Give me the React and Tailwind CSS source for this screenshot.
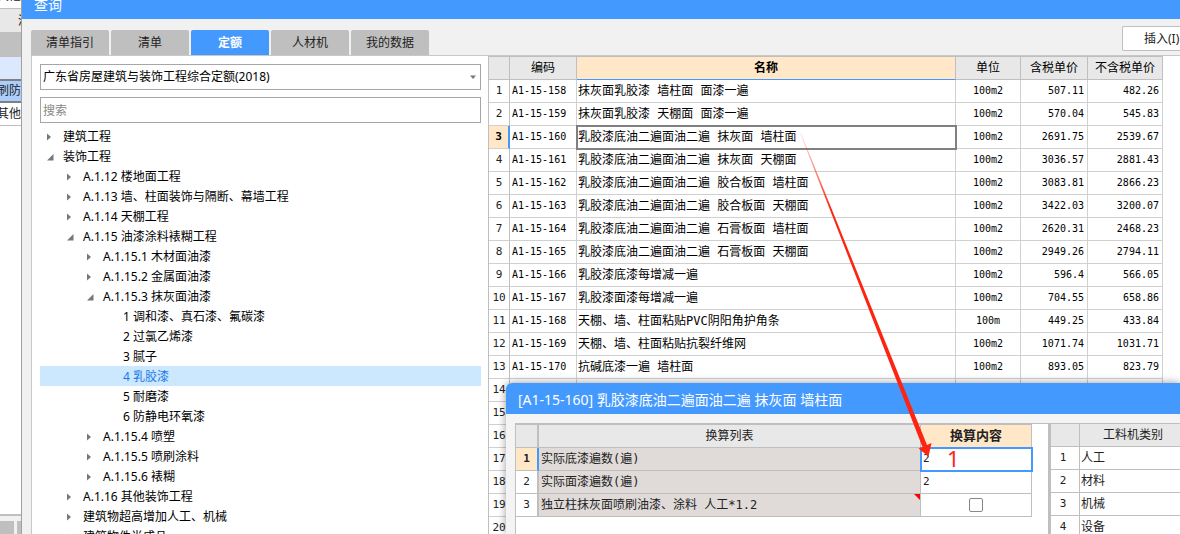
import React from 'react'

const TABS = ['清单指引', '清单', '定额', '人材机', '我的数据']

const TREE = [
  { level: 0, label: '建筑工程', state: 'closed' },
  { level: 0, label: '装饰工程', state: 'open' },
  { level: 1, label: 'A.1.12 楼地面工程', state: 'closed' },
  { level: 1, label: 'A.1.13 墙、柱面装饰与隔断、幕墙工程', state: 'closed' },
  { level: 1, label: 'A.1.14 天棚工程', state: 'closed' },
  { level: 1, label: 'A.1.15 油漆涂料裱糊工程', state: 'open' },
  { level: 2, label: 'A.1.15.1 木材面油漆', state: 'closed' },
  { level: 2, label: 'A.1.15.2 金属面油漆', state: 'closed' },
  { level: 2, label: 'A.1.15.3 抹灰面油漆', state: 'open' },
  { level: 3, label: '1 调和漆、真石漆、氟碳漆' },
  { level: 3, label: '2 过氯乙烯漆' },
  { level: 3, label: '3 腻子' },
  { level: 3, label: '4 乳胶漆', selected: true },
  { level: 3, label: '5 耐磨漆' },
  { level: 3, label: '6 防静电环氧漆' },
  { level: 2, label: 'A.1.15.4 喷塑', state: 'closed' },
  { level: 2, label: 'A.1.15.5 喷刷涂料', state: 'closed' },
  { level: 2, label: 'A.1.15.6 裱糊', state: 'closed' },
  { level: 1, label: 'A.1.16 其他装饰工程', state: 'closed' },
  { level: 1, label: '建筑物超高增加人工、机械', state: 'closed' },
  { level: 1, label: '建筑物件半成品', state: 'closed' },
]

const INDENT = ['pl-[7px]', 'pl-[27px]', 'pl-[47px]', 'pl-[67px]']

const QUOTAS = [
  ['A1-15-158', '抹灰面乳胶漆 墙柱面 面漆一遍', '100m2', '507.11', '482.26'],
  ['A1-15-159', '抹灰面乳胶漆 天棚面 面漆一遍', '100m2', '570.04', '545.83'],
  ['A1-15-160', '乳胶漆底油二遍面油二遍 抹灰面 墙柱面', '100m2', '2691.75', '2539.67'],
  ['A1-15-161', '乳胶漆底油二遍面油二遍 抹灰面 天棚面', '100m2', '3036.57', '2881.43'],
  ['A1-15-162', '乳胶漆底油二遍面油二遍 胶合板面 墙柱面', '100m2', '3083.81', '2866.23'],
  ['A1-15-163', '乳胶漆底油二遍面油二遍 胶合板面 天棚面', '100m2', '3422.03', '3200.07'],
  ['A1-15-164', '乳胶漆底油二遍面油二遍 石膏板面 墙柱面', '100m2', '2620.31', '2468.23'],
  ['A1-15-165', '乳胶漆底油二遍面油二遍 石膏板面 天棚面', '100m2', '2949.26', '2794.11'],
  ['A1-15-166', '乳胶漆底漆每增减一遍', '100m2', '596.4', '566.05'],
  ['A1-15-167', '乳胶漆面漆每增减一遍', '100m2', '704.55', '658.86'],
  ['A1-15-168', '天棚、墙、柱面粘贴PVC阴阳角护角条', '100m', '449.25', '433.84'],
  ['A1-15-169', '天棚、墙、柱面粘贴抗裂纤维网', '100m2', '1071.74', '1031.71'],
  ['A1-15-170', '抗碱底漆一遍 墙柱面', '100m2', '893.05', '823.79'],
  ['', '', '', '', ''],
  ['', '', '', '', ''],
  ['', '', '', '', ''],
  ['', '', '', '', ''],
  ['', '', '', '', ''],
  ['', '', '', '', ''],
  ['', '', '', '', ''],
]

const CATEGORIES = ['人工', '材料', '机械', '设备']

const HEAD = 'h-[23px] border-r border-b border-[#bfbfbf] bg-[#e8e8e8] p-0 font-normal text-black'
const CELL = 'h-[23px] border-r border-b border-[#d0d0d0] p-0 whitespace-nowrap'
const SUBHEAD = 'h-[23px] border-r border-b border-[#bfbfbf] bg-[#e8e8e8] p-0 font-normal text-[#222]'
const SUBCELL = 'h-[23px] border-r border-b border-[#bfbfbf] p-0 whitespace-nowrap'
const MONO = "font-['DejaVu_Sans_Mono','Noto_Sans_CJK_SC',monospace]"

function Marker({ state }) {
  return (
    <svg className="h-2 w-4 shrink-0" viewBox="0 0 16 8" fill="#777" aria-hidden="true">
      {state === 'closed' && <path d="M0 0.5v7l4-3.5z" />}
      {state === 'open' && <path d="M6.5 1v6.5H0z" />}
    </svg>
  )
}

// strip of the main window that stays visible behind the dialog
function BackWindow() {
  return (
    <aside className="flex w-[21px] shrink-0 flex-col overflow-hidden bg-white text-xs whitespace-nowrap text-[#222]">
      <div className="flex h-[9px] items-end justify-end overflow-hidden border-b border-[#bfbfbf] pb-1 leading-4">其他</div>
      <div className="flex h-6 items-center overflow-hidden border-b border-[#bfbfbf] bg-[#e8e8e8] pl-[18px]">清单</div>
      <div className="h-6 bg-[#c0c0c0]" />
      <div className="h-[22px] bg-[#dce8fd]" />
      <div className="flex h-6 items-center justify-end border-y-2 border-[#808080] bg-[#abcefd]">刷防</div>
      <div className="flex h-[23px] items-center justify-end border-b border-[#bfbfbf]">其他</div>
      <div className="flex-1" />
      <div className="flex h-5 gap-[3px] border-t-2 border-[#bfbfbf] bg-[#f1f1f1] pt-[5px]">
        <div className="w-[14px] bg-[#bfbfbf]" />
        <div className="flex-1 bg-[#bfbfbf]" />
      </div>
    </aside>
  )
}

function CatalogPanel() {
  return (
    <div className="w-[457px] shrink-0 border-l border-[#c8c8c8] pt-2 pr-[7px] pl-2">
      <div className="grid items-center">
        <select
          aria-label="定额库"
          className="col-start-1 row-start-1 h-[26px] w-full appearance-none border border-[#a6a6a6] bg-white px-[2px] text-black outline-none"
        >
          <option>广东省房屋建筑与装饰工程综合定额(2018)</option>
        </select>
        <svg className="pointer-events-none col-start-1 row-start-1 mr-[5px] h-1 w-[6px] justify-self-end" viewBox="0 0 6 4" fill="#777" aria-hidden="true">
          <path d="M0 0.5h6L3 4z" />
        </svg>
      </div>
      <input
        type="text"
        aria-label="搜索"
        placeholder="搜索"
        className="mt-[7px] block h-[26px] w-full border border-[#a6a6a6] px-[2px] outline-none placeholder:text-[#888]"
      />
      <ul className="mt-[3px]">
        {TREE.map((n) => (
          <li key={n.label}>
            <button
              type="button"
              className={`flex h-5 w-full items-center pt-[2px] whitespace-nowrap ${INDENT[n.level]} ${n.selected ? 'bg-[#cce8ff] text-[#1a7ae8]' : 'text-black'}`}
            >
              <Marker state={n.state} />
              {n.label}
            </button>
          </li>
        ))}
      </ul>
    </div>
  )
}

function QuotaTable() {
  return (
    <div className="min-w-0 flex-1 pr-[17px]">
      <table className={`w-full table-fixed border-separate border-spacing-0 border-t border-l border-[#bfbfbf] text-xs text-black ${MONO}`}>
        <colgroup>
          <col className="w-[21px]" />
          <col className="w-[67px]" />
          <col />
          <col className="w-[65px]" />
          <col className="w-[67px]" />
          <col className="w-[75px]" />
        </colgroup>
        <thead>
          <tr>
            <th className={HEAD} />
            <th className={HEAD}>编码</th>
            <th className="h-[23px] border-r border-b border-r-[#bfbfbf] border-b-[#4499ff] bg-[#ffe7c8] p-0 font-bold">名称</th>
            <th className={HEAD}>单位</th>
            <th className={HEAD}>含税单价</th>
            <th className={HEAD}>不含税单价</th>
          </tr>
        </thead>
        <tbody>
          {QUOTAS.map(([code, name, unit, price, net], i) => {
            const active = i === 2
            return (
              <tr key={i}>
                <td className={`${CELL} text-center text-[11px] ${active ? 'border-r-2 border-r-[#4499ff] bg-[#ffe7c8] font-bold' : 'border-r-[#bfbfbf] text-[#222]'}`}>{i + 1}</td>
                <td className={`${CELL} pl-[2px] text-[10px]`}>{code}</td>
                <td className={`${CELL} pl-px ${active ? 'outline-2 -outline-offset-1 outline-[#808080]' : ''}`}>{name}</td>
                <td className={`${CELL} text-center text-[10px]`}>{unit}</td>
                <td className={`${CELL} pr-[3px] text-right text-[10px]`}>{price}</td>
                <td className={`${CELL} pr-[3px] text-right text-[10px]`}>{net}</td>
              </tr>
            )
          })}
        </tbody>
      </table>
    </div>
  )
}

function ConversionDialog() {
  return (
    <section className="absolute top-[383px] right-0 bottom-0 left-[506px] flex flex-col overflow-hidden rounded-tl-md bg-[#f4f4f4] shadow-[0_0_8px_rgba(0,0,0,0.4)]">
      <h2 className="flex h-[31px] shrink-0 items-center bg-[#4499ff] pt-[2px] pl-3 text-sm text-white">
        [A1-15-160] 乳胶漆底油二遍面油二遍 抹灰面 墙柱面
      </h2>
      <div className={`mt-[9px] ml-[9px] flex flex-1 border-t border-[#bfbfbf] bg-white text-xs text-[#222] ${MONO}`}>
        <div className="w-[533px] shrink-0 border-l border-[#bfbfbf]">
          <table className="w-[516px] table-fixed border-separate border-spacing-0 border-t border-[#bfbfbf]">
            <colgroup>
              <col className="w-[23px]" />
              <col />
              <col className="w-[111px]" />
            </colgroup>
            <thead>
              <tr>
                <th className={`${SUBHEAD} border-r-2`} />
                <th className={SUBHEAD}>换算列表</th>
                <th className="h-[23px] border-r border-b border-[#bfbfbf] bg-[#ffe7c8] p-0 text-[13px] leading-4 font-bold">换算内容</th>
              </tr>
            </thead>
            <tbody>
              <tr>
                <td className={`${SUBCELL} border-r-2 border-r-[#4499ff] bg-[#ffe7c8] text-center text-[11px] font-bold`}>1</td>
                <td className={`${SUBCELL} bg-[#e0dbd8] pl-[2px]`}>实际底漆遍数(遍)</td>
                <td className={`${SUBCELL} relative outline-2 -outline-offset-1 outline-[#4499ff]`}>
                  <input aria-label="实际底漆遍数" defaultValue="2" className="block w-full bg-transparent pl-[2px] text-[11px] outline-none" />
                  <span className="absolute top-0 left-[26px] font-['Noto_Sans',sans-serif] text-[22px] leading-5 text-[#fd2412]">1</span>
                </td>
              </tr>
              <tr>
                <td className={`${SUBCELL} border-r-2 text-center text-[11px]`}>2</td>
                <td className={`${SUBCELL} bg-[#e0dbd8] pl-[2px]`}>实际面漆遍数(遍)</td>
                <td className={SUBCELL}>
                  <input aria-label="实际面漆遍数" defaultValue="2" className="block w-full bg-transparent pl-[2px] text-[11px] outline-none" />
                </td>
              </tr>
              <tr>
                <td className={`${SUBCELL} border-r-2 text-center text-[11px]`}>3</td>
                <td className={`${SUBCELL} relative bg-[#e0dbd8] pl-[2px]`}>
                  独立柱抹灰面喷刷油漆、涂料 人工*1.2
                  <svg className="absolute top-0 right-0 h-[6px] w-[6px]" viewBox="0 0 6 6" fill="#f00" aria-hidden="true">
                    <path d="M0 0h6v6z" />
                  </svg>
                </td>
                <td className={SUBCELL}>
                  <input
                    type="checkbox"
                    aria-label="独立柱抹灰面喷刷油漆、涂料 人工*1.2"
                    className="mx-auto block h-[14px] w-[14px] appearance-none rounded-xs border border-[#888] bg-white"
                  />
                </td>
              </tr>
            </tbody>
          </table>
        </div>
        <div className="min-w-0 flex-1 overflow-hidden border-l-3 border-[#bfbfbf]">
          <table className="w-[136px] table-fixed border-separate border-spacing-0">
            <colgroup>
              <col className="w-[29px]" />
              <col />
            </colgroup>
            <thead>
              <tr>
                <th className={SUBHEAD} />
                <th className={SUBHEAD}>工料机类别</th>
              </tr>
            </thead>
            <tbody>
              {CATEGORIES.map((c, i) => (
                <tr key={c}>
                  <td className={`${SUBCELL} pr-1 text-center text-[11px]`}>{i + 1}</td>
                  <td className={`${SUBCELL} pl-px`}>{c}</td>
                </tr>
              ))}
            </tbody>
          </table>
        </div>
      </div>
    </section>
  )
}

function Arrow() {
  return (
    <svg className="pointer-events-none absolute top-[133px] left-[800px] h-[324px] w-[134px]" viewBox="800 133 134 324" aria-hidden="true">
      <defs>
        <linearGradient id="fade" x1="0" y1="133" x2="0" y2="210" gradientUnits="userSpaceOnUse">
          <stop offset="0" stopColor="#fd2412" stopOpacity="0.1" />
          <stop offset="1" stopColor="#fd2412" />
        </linearGradient>
      </defs>
      <path d="M800 133L801 133L927 445L931.5 443L928.5 456.5L918.5 448.5L922.5 447Z" fill="url(#fade)" />
    </svg>
  )
}

export default function App() {
  return (
    <div className="relative flex h-screen overflow-hidden bg-white font-['Noto_Sans','Noto_Sans_CJK_SC',sans-serif] text-xs">
      <BackWindow />
      <main className="flex min-w-0 flex-1 flex-col border-l border-[#a0a0a0] bg-[#f1f1f1]">
        <h1 className="flex h-[19px] shrink-0 items-end overflow-hidden bg-[#4499ff] pb-1 pl-3 text-sm text-white">查询</h1>
        <div className="flex h-9 shrink-0 items-end justify-between pl-[9px]">
          <div role="tablist" className="flex gap-[2px]">
            {TABS.map((t) => (
              <button
                key={t}
                type="button"
                role="tab"
                aria-selected={t === '定额'}
                className={`h-[25px] w-[78px] rounded-t-xs ${t === '定额' ? 'bg-[#4499ff] font-bold text-white' : 'bg-[#bfbfbf] text-[#222]'}`}
              >
                {t}
              </button>
            ))}
          </div>
          <button type="button" className="mb-1 h-[25px] w-[58px] overflow-hidden rounded-l-xs border border-r-0 border-[#bfbfbf] bg-white pl-[21px] text-left whitespace-nowrap text-[#222]">
            插入(I)
          </button>
        </div>
        <div className="ml-[9px] flex min-h-0 flex-1 overflow-hidden border-t border-[#c8c8c8] bg-white">
          <CatalogPanel />
          <QuotaTable />
        </div>
      </main>
      <ConversionDialog />
      <Arrow />
    </div>
  )
}
